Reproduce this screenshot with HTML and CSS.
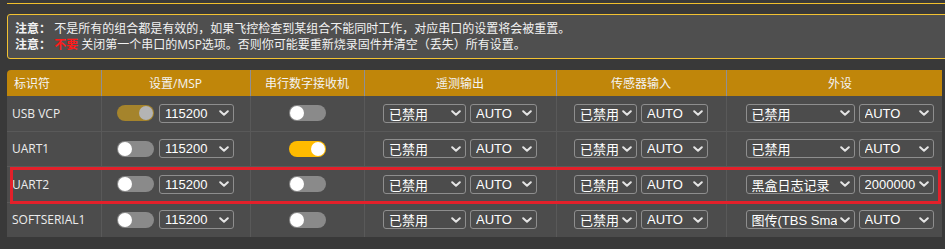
FILE: index.html
```html
<!DOCTYPE html>
<html>
<head>
  <title>端口</title>
  <link rel="stylesheet" href="styles.css">
</head>
<body>
  <div class="topline"></div>

  <!-- notes above the port table -->
  <div class="notice">
    <p><b>注意：</b> 不是所有的组合都是有效的，如果飞控检查到某组合不能同时工作，对应串口的设置将会被重置。</p>
    <p><b>注意：</b> <b class="red">不要</b> 关闭第一个串口的MSP选项。否则你可能要重新烧录固件并清空（丢失）所有设置。</p>
  </div>

  <div class="ports">
    <table>
      <colgroup>
        <col class="c-id">
        <col class="c-msp">
        <col class="c-rx">
        <col class="c-tel">
        <col class="c-sen">
        <col class="c-per">
      </colgroup>
      <thead>
        <tr>
          <th class="first">标识符</th>
          <th>设置/MSP</th>
          <th>串行数字接收机</th>
          <th>遥测输出</th>
          <th>传感器输入</th>
          <th>外设</th>
        </tr>
      </thead>
      <tbody>
        <tr>
          <td class="first">USB VCP</td>
          <td><div class="pair wide"><span class="switch on locked"><span class="knob"></span></span><span class="sel w75"><span class="val">115200</span><svg viewBox="0 0 10 6"><polyline points="1.2,1.2 5,4.8 8.8,1.2"/></svg></span></div></td>
          <td><div class="pair"><span class="switch"><span class="knob"></span></span></div></td>
          <td><div class="pair"><span class="sel w83"><span class="val">已禁用</span><svg viewBox="0 0 10 6"><polyline points="1.2,1.2 5,4.8 8.8,1.2"/></svg></span><span class="sel w67"><span class="val">AUTO</span><svg viewBox="0 0 10 6"><polyline points="1.2,1.2 5,4.8 8.8,1.2"/></svg></span></div></td>
          <td><div class="pair"><span class="sel w63"><span class="val">已禁用</span><svg viewBox="0 0 10 6"><polyline points="1.2,1.2 5,4.8 8.8,1.2"/></svg></span><span class="sel w67"><span class="val">AUTO</span><svg viewBox="0 0 10 6"><polyline points="1.2,1.2 5,4.8 8.8,1.2"/></svg></span></div></td>
          <td class="last"><div class="pair left"><span class="sel w109"><span class="val">已禁用</span><svg viewBox="0 0 10 6"><polyline points="1.2,1.2 5,4.8 8.8,1.2"/></svg></span><span class="sel w75"><span class="val">AUTO</span><svg viewBox="0 0 10 6"><polyline points="1.2,1.2 5,4.8 8.8,1.2"/></svg></span></div></td>
        </tr>
        <tr>
          <td class="first">UART1</td>
          <td><div class="pair wide"><span class="switch"><span class="knob"></span></span><span class="sel w75"><span class="val">115200</span><svg viewBox="0 0 10 6"><polyline points="1.2,1.2 5,4.8 8.8,1.2"/></svg></span></div></td>
          <td><div class="pair"><span class="switch on"><span class="knob"></span></span></div></td>
          <td><div class="pair"><span class="sel w83"><span class="val">已禁用</span><svg viewBox="0 0 10 6"><polyline points="1.2,1.2 5,4.8 8.8,1.2"/></svg></span><span class="sel w67"><span class="val">AUTO</span><svg viewBox="0 0 10 6"><polyline points="1.2,1.2 5,4.8 8.8,1.2"/></svg></span></div></td>
          <td><div class="pair"><span class="sel w63"><span class="val">已禁用</span><svg viewBox="0 0 10 6"><polyline points="1.2,1.2 5,4.8 8.8,1.2"/></svg></span><span class="sel w67"><span class="val">AUTO</span><svg viewBox="0 0 10 6"><polyline points="1.2,1.2 5,4.8 8.8,1.2"/></svg></span></div></td>
          <td class="last"><div class="pair left"><span class="sel w109"><span class="val">已禁用</span><svg viewBox="0 0 10 6"><polyline points="1.2,1.2 5,4.8 8.8,1.2"/></svg></span><span class="sel w75"><span class="val">AUTO</span><svg viewBox="0 0 10 6"><polyline points="1.2,1.2 5,4.8 8.8,1.2"/></svg></span></div></td>
        </tr>
        <tr>
          <td class="first">UART2</td>
          <td><div class="pair wide"><span class="switch"><span class="knob"></span></span><span class="sel w75"><span class="val">115200</span><svg viewBox="0 0 10 6"><polyline points="1.2,1.2 5,4.8 8.8,1.2"/></svg></span></div></td>
          <td><div class="pair"><span class="switch"><span class="knob"></span></span></div></td>
          <td><div class="pair"><span class="sel w83"><span class="val">已禁用</span><svg viewBox="0 0 10 6"><polyline points="1.2,1.2 5,4.8 8.8,1.2"/></svg></span><span class="sel w67"><span class="val">AUTO</span><svg viewBox="0 0 10 6"><polyline points="1.2,1.2 5,4.8 8.8,1.2"/></svg></span></div></td>
          <td><div class="pair"><span class="sel w63"><span class="val">已禁用</span><svg viewBox="0 0 10 6"><polyline points="1.2,1.2 5,4.8 8.8,1.2"/></svg></span><span class="sel w67"><span class="val">AUTO</span><svg viewBox="0 0 10 6"><polyline points="1.2,1.2 5,4.8 8.8,1.2"/></svg></span></div></td>
          <td class="last"><div class="pair left"><span class="sel w109"><span class="val">黑盒日志记录</span><svg viewBox="0 0 10 6"><polyline points="1.2,1.2 5,4.8 8.8,1.2"/></svg></span><span class="sel w75"><span class="val">2000000</span><svg viewBox="0 0 10 6"><polyline points="1.2,1.2 5,4.8 8.8,1.2"/></svg></span></div></td>
        </tr>
        <tr>
          <td class="first">SOFTSERIAL1</td>
          <td><div class="pair wide"><span class="switch"><span class="knob"></span></span><span class="sel w75"><span class="val">115200</span><svg viewBox="0 0 10 6"><polyline points="1.2,1.2 5,4.8 8.8,1.2"/></svg></span></div></td>
          <td><div class="pair"><span class="switch"><span class="knob"></span></span></div></td>
          <td><div class="pair"><span class="sel w83"><span class="val">已禁用</span><svg viewBox="0 0 10 6"><polyline points="1.2,1.2 5,4.8 8.8,1.2"/></svg></span><span class="sel w67"><span class="val">AUTO</span><svg viewBox="0 0 10 6"><polyline points="1.2,1.2 5,4.8 8.8,1.2"/></svg></span></div></td>
          <td><div class="pair"><span class="sel w63"><span class="val">已禁用</span><svg viewBox="0 0 10 6"><polyline points="1.2,1.2 5,4.8 8.8,1.2"/></svg></span><span class="sel w67"><span class="val">AUTO</span><svg viewBox="0 0 10 6"><polyline points="1.2,1.2 5,4.8 8.8,1.2"/></svg></span></div></td>
          <td class="last"><div class="pair left"><span class="sel w109"><span class="val">图传(TBS SmartAudio)</span><svg viewBox="0 0 10 6"><polyline points="1.2,1.2 5,4.8 8.8,1.2"/></svg></span><span class="sel w75"><span class="val">AUTO</span><svg viewBox="0 0 10 6"><polyline points="1.2,1.2 5,4.8 8.8,1.2"/></svg></span></div></td>
        </tr>
      </tbody>
    </table>

    <!-- red annotation frame around the UART2 row -->
    <div class="highlight"></div>
  </div>
</body>
</html>
```

FILE: styles.css
```css
html, body {
  overflow: hidden;
}
body {
  margin: 0;
  background-color: #393939;
  color: #ececec;
  font-family: "Open Sans", "Noto Sans CJK SC", sans-serif;
  font-size: 12px;
}
.topline {
  height: 1px;
  margin: 3px 0 0 7px;
  background-color: #f0bf2c;
}
.notice {
  width: 960px;
  margin: 10px 0 0 7px;
  padding: 6px 0 5px 7px;
  background-color: #4f4f4f;
  border: 1px solid #f2c232;
  border-radius: 3px 0 0 3px;
  color: #f2f2f2;
}
.notice p {
  margin: 0;
  line-height: 16px;
}
.notice b {
  font-weight: bold;
}
.notice .red {
  color: #ff1a1a;
}

/* port table */
.ports {
  position: relative;
  width: 935px;
  margin: 11px 0 0 7px;
  overflow: hidden;
  border-radius: 4px 0 0 0;
}
.ports table {
  width: 947px;
  table-layout: fixed;
  border-collapse: collapse;
}
.ports col.c-id  { width: 94px; }
.ports col.c-msp { width: 149px; }
.ports col.c-rx  { width: 114px; }
.ports col.c-tel { width: 192px; }
.ports col.c-sen { width: 170px; }
.ports col.c-per { width: 228px; }

.ports th {
  height: 26px;
  padding: 0;
  background-color: #c0860a;
  color: #f4f4f4;
  font-weight: normal;
  text-align: center;
  border-right: 1px solid #8d8f96;
}
.ports td {
  height: 34.5px;
  padding: 0;
  background-color: #4c4c4c;
  border-top: 1px solid #595959;
  border-right: 1px solid #595959;
  text-align: center;
}
.ports tbody tr:first-child td {
  border-top: none;
}
.ports th.first {
  padding-left: 7px;
  text-align: left;
}
.ports td.first {
  padding-left: 5px;
  text-align: left;
}
.ports td.last {
  padding-left: 19px;
}

.pair {
  display: flex;
  justify-content: center;
  align-items: center;
  gap: 4px;
}
.pair.wide {
  gap: 5px;
}
.pair.left {
  justify-content: flex-start;
}

/* toggle switch */
.switch {
  display: inline-flex;
  align-items: center;
  justify-content: flex-start;
  box-sizing: border-box;
  width: 37px;
  height: 16px;
  padding: 0 1px;
  border-radius: 8px;
  background-color: #8a8a8a;
}
.switch .knob {
  width: 14px;
  height: 14px;
  border-radius: 50%;
  background-color: #ffffff;
}
.switch.on {
  justify-content: flex-end;
  background-color: #ffbb00;
}
.switch.locked {
  background-color: #a5842c;
}
.switch.locked .knob {
  background-color: #b4b4b4;
}

/* select box */
.sel {
  display: inline-flex;
  align-items: center;
  box-sizing: border-box;
  height: 19px;
  padding: 0 4px 0 5px;
  border: 1px solid #8e8e8e;
  border-radius: 3px;
  color: #ffffff;
  font-family: "Liberation Sans", "Noto Sans CJK SC", sans-serif;
  font-size: 13px;
  text-align: left;
}
.sel .val {
  flex: 1;
  overflow: hidden;
  white-space: nowrap;
}
.sel svg {
  flex: none;
  width: 10px;
  height: 6px;
  margin-left: 3px;
  fill: none;
  stroke: #e4e4e4;
  stroke-width: 2;
  stroke-linecap: round;
  stroke-linejoin: round;
}
.w63 { width: 63px; }
.w67 { width: 67px; }
.w75 { width: 75px; }
.w83 { width: 83px; }
.w109 { width: 109px; }

.highlight {
  position: absolute;
  left: 3px;
  top: 97px;
  width: 931px;
  height: 37px;
  box-sizing: border-box;
  border: 3px solid #e3202a;
}
```
